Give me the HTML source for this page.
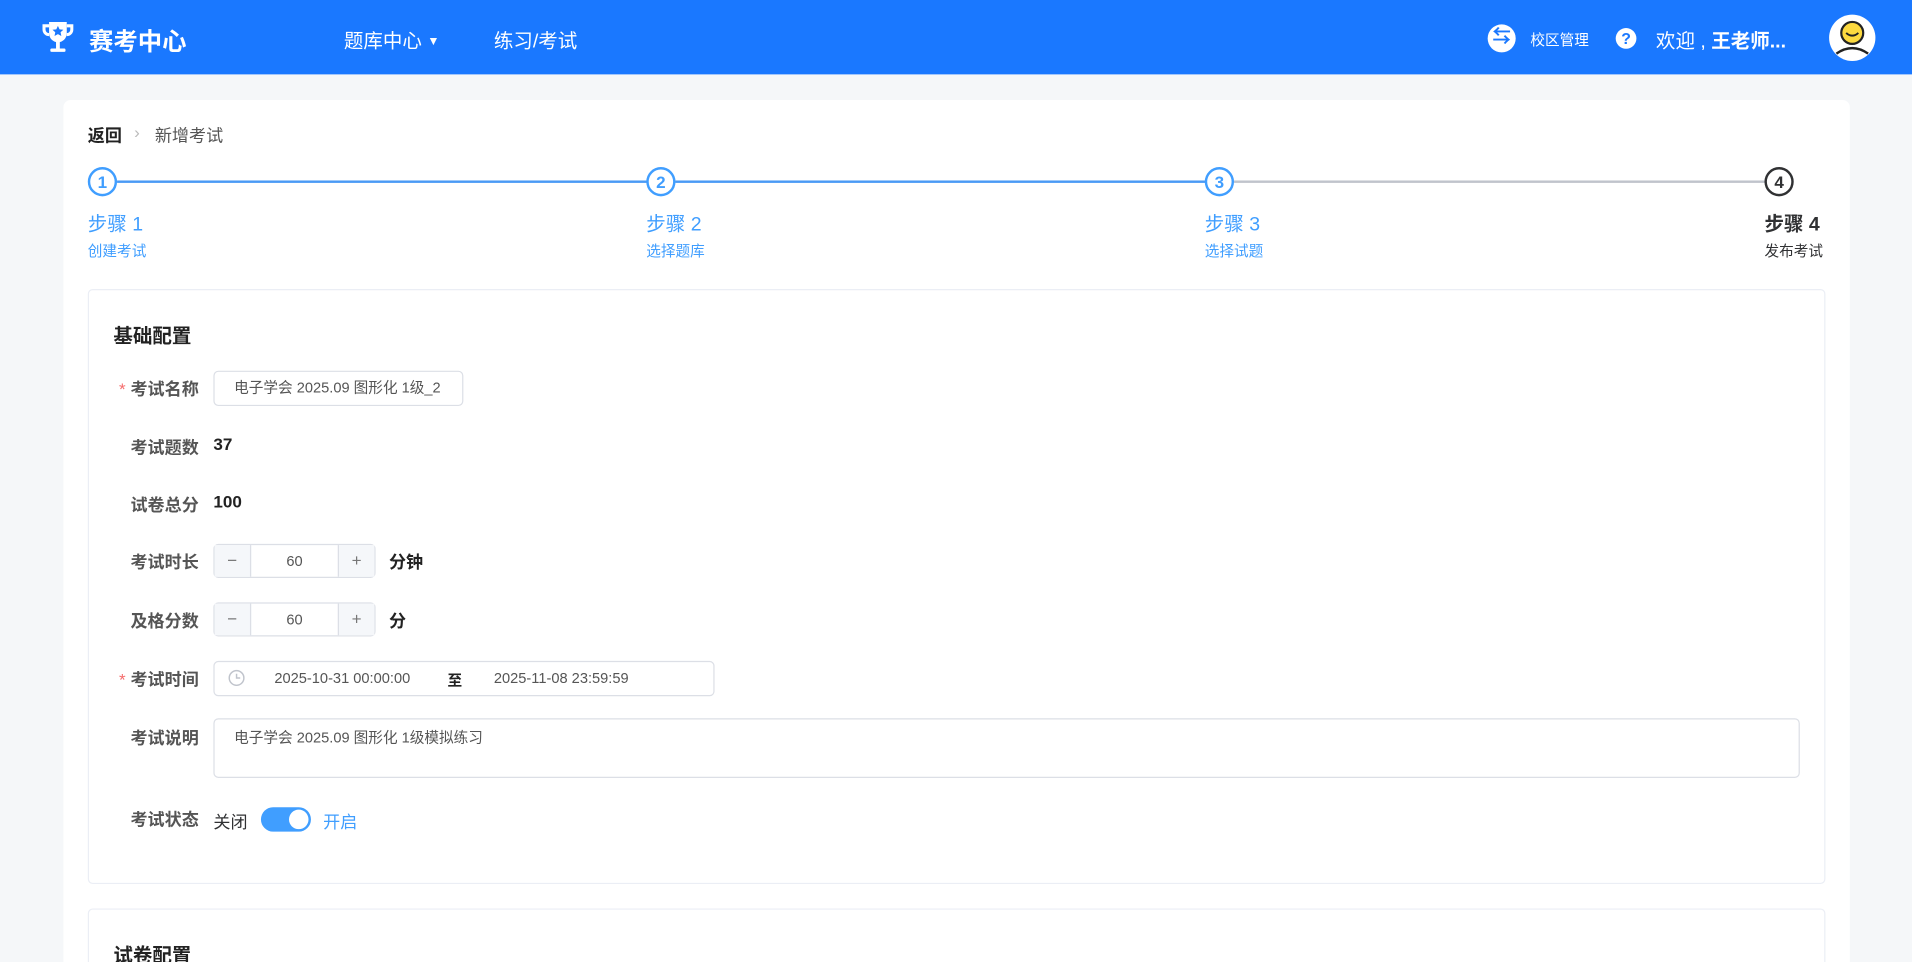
<!DOCTYPE html>
<html><head><meta charset="utf-8">
<style>
*{box-sizing:border-box;margin:0;padding:0}
html,body{width:1912px;height:962px;overflow:hidden;background:#f5f7f9}
body{font-family:"Liberation Sans","Noto Sans CJK SC",sans-serif}
#w{width:1568px;height:789px;transform:scale(1.21939);transform-origin:0 0;position:relative;background:#f5f7f9}
.a{position:absolute;white-space:nowrap}
.hd{position:absolute;left:0;top:0;width:1568px;height:61px;background:#1a78ff;color:#fff}
.card{position:absolute;left:52px;top:82px;width:1465px;height:720px;background:#fff;border-radius:6px}
.box{position:absolute;border:1px solid #ebeef5;border-radius:4px;background:#fff}
.circ{position:absolute;width:24px;height:24px;border-radius:50%;border:2px solid #409eff;color:#409eff;font-size:14px;font-weight:bold;text-align:center;line-height:20px;background:#fff}
.st{font-size:16px;color:#409eff}
.sd{font-size:12px;color:#409eff}
.lb{font-size:14px;font-weight:bold;color:#555;right:1405px}
.req:before{content:"*";color:#f56c6c;margin-right:4px;font-weight:normal}
.inp{position:absolute;border:1px solid #dcdfe6;border-radius:4px;background:#fff;font-size:12px;color:#555}
.num{position:absolute;width:133px;height:28px;border:1px solid #dcdfe6;border-radius:4px;background:#fff}
.num .m,.num .p{position:absolute;top:0;width:30px;height:26px;background:#f5f7fa;color:#777;text-align:center;line-height:25px;font-size:14px}
.num .m{left:0;border-right:1px solid #dcdfe6}
.num .p{right:0;border-left:1px solid #dcdfe6}
.num .v{position:absolute;left:30px;right:30px;top:0;line-height:26px;text-align:center;font-size:12px;color:#555}
.val{font-size:14px;font-weight:bold;color:#222}
</style></head><body><div id="w">
<div class="hd">
<svg class="a" style="left:33px;top:16px" width="29" height="29" viewBox="0 0 28 28"><path d="M7 2h14v9a7 7 0 0 1-14 0z" fill="#fff"/><path d="M7 5H3v3a4 4 0 0 0 4 4M21 5h4v3a4 4 0 0 1-4 4" stroke="#fff" stroke-width="2.4" fill="none"/><rect x="12.5" y="17" width="3" height="6" fill="#fff"/><rect x="8" y="23" width="12" height="2.6" rx="1" fill="#fff"/><path d="M14 5l1.3 2.8 3 .3-2.2 2 .6 3-2.7-1.5-2.7 1.5.6-3-2.2-2 3-.3z" fill="#1a78ff"/></svg>
<div class="a" style="left:73px;top:18px;font-size:20px;font-weight:bold">赛考中心</div>
<div class="a" style="left:282px;top:20px;font-size:16px">题库中心 <span style="font-size:10px;position:relative;top:-2px">▼</span></div>
<div class="a" style="left:405px;top:20px;font-size:16px">练习/考试</div>
<div class="a" style="left:1220px;top:20px;width:23px;height:23px;border-radius:50%;background:#fff;color:#1a78ff;text-align:center;line-height:22px;font-size:15px;font-weight:bold">⇆</div>
<div class="a" style="left:1255px;top:24px;font-size:12px">校区管理</div>
<div class="a" style="left:1325px;top:23px;width:17px;height:17px;border-radius:50%;background:#fff;color:#1a78ff;text-align:center;line-height:17px;font-size:13px;font-weight:bold">?</div>
<div class="a" style="left:1358px;top:20px;font-size:16px">欢迎 , <b>王老师...</b></div>
<div class="a" style="left:1500px;top:12px;width:38px;height:38px;border-radius:50%;background:#fff;overflow:hidden">
<svg width="38" height="38" viewBox="0 0 38 38"><circle cx="19" cy="15" r="9" fill="#fcd93f" stroke="#222" stroke-width="1.8"/><path d="M14 15q5 4.5 10 0" stroke="#222" stroke-width="1.6" fill="none"/><path d="M6 32q13-9 26 0" stroke="#222" stroke-width="2" fill="none"/></svg></div>
</div>
<div class="card">
<div class="a" style="left:20px;top:19px;font-size:14px;font-weight:bold;color:#222">返回</div>
<div class="a" style="left:58px;top:18px;font-size:14px;color:#bbb">›</div>
<div class="a" style="left:75px;top:19px;font-size:14px;color:#555">新增考试</div>
<div class="a" style="left:44px;top:66px;width:436px;height:2px;background:#4a9af5"></div>
<div class="a" style="left:502px;top:66px;width:436px;height:2px;background:#4a9af5"></div>
<div class="a" style="left:960px;top:66px;width:437px;height:2px;background:#c0c4cc"></div>
<div class="circ" style="left:20px;top:55px">1</div>
<div class="circ" style="left:478px;top:55px">2</div>
<div class="circ" style="left:936px;top:55px">3</div>
<div class="circ" style="left:1395px;top:55px;border-color:#303133;color:#303133">4</div>
<div class="a st" style="left:20px;top:88px">步骤 1</div><div class="a sd" style="left:20px;top:115px">创建考试</div>
<div class="a st" style="left:478px;top:88px">步骤 2</div><div class="a sd" style="left:478px;top:115px">选择题库</div>
<div class="a st" style="left:936px;top:88px">步骤 3</div><div class="a sd" style="left:936px;top:115px">选择试题</div>
<div class="a st" style="left:1395px;top:88px;color:#303133;font-weight:bold">步骤 4</div><div class="a sd" style="left:1395px;top:115px;color:#303133">发布考试</div>
</div>
<div class="box" style="left:72px;top:237px;width:1425px;height:488px"></div>
<div class="a" style="left:93px;top:262px;font-size:16px;font-weight:bold;color:#222">基础配置</div>
<div class="a lb req" style="top:309px">考试名称</div>
<div class="inp" style="left:175px;top:304px;width:205px;height:29px;line-height:27px;padding-left:16px">电子学会 2025.09 图形化 1级_2</div>
<div class="a lb" style="top:357px">考试题数</div><div class="a val" style="left:175px;top:356px">37</div>
<div class="a lb" style="top:404px">试卷总分</div><div class="a val" style="left:175px;top:403px">100</div>
<div class="a lb" style="top:451px">考试时长</div>
<div class="num" style="left:175px;top:446px"><div class="m">−</div><div class="v">60</div><div class="p">+</div></div>
<div class="a val" style="left:319px;top:451px">分钟</div>
<div class="a lb" style="top:499px">及格分数</div>
<div class="num" style="left:175px;top:494px"><div class="m">−</div><div class="v">60</div><div class="p">+</div></div>
<div class="a val" style="left:319px;top:499px">分</div>
<div class="a lb req" style="top:547px">考试时间</div>
<div class="inp" style="left:175px;top:542px;width:411px;height:29px">
<svg class="a" style="left:11px;top:6px" width="14" height="14" viewBox="0 0 14 14"><circle cx="7" cy="7" r="6" stroke="#c0c4cc" fill="none" stroke-width="1.2"/><path d="M7 3.5V7h3" stroke="#c0c4cc" fill="none" stroke-width="1.2"/></svg>
<div class="a" style="left:49px;top:6px">2025-10-31 00:00:00</div>
<div class="a" style="left:191px;top:6px;color:#222;font-weight:bold">至</div>
<div class="a" style="left:229px;top:6px">2025-11-08 23:59:59</div>
</div>
<div class="a lb" style="top:595px">考试说明</div>
<div class="inp" style="left:175px;top:589px;width:1301px;height:49px;padding:6px 16px">电子学会 2025.09 图形化 1级模拟练习</div>
<div class="a lb" style="top:662px">考试状态</div>
<div class="a" style="left:175px;top:664px;font-size:14px;color:#303133">关闭</div>
<div class="a" style="left:214px;top:662px;width:41px;height:20px;border-radius:10px;background:#409eff"><div style="position:absolute;right:2px;top:2px;width:16px;height:16px;border-radius:50%;background:#fff"></div></div>
<div class="a" style="left:265px;top:664px;font-size:14px;color:#409eff">开启</div>
<div class="box" style="left:72px;top:745px;width:1425px;height:60px"></div>
<div class="a" style="left:93px;top:770px;font-size:16px;font-weight:bold;color:#222">试卷配置</div>
</div></body></html>
